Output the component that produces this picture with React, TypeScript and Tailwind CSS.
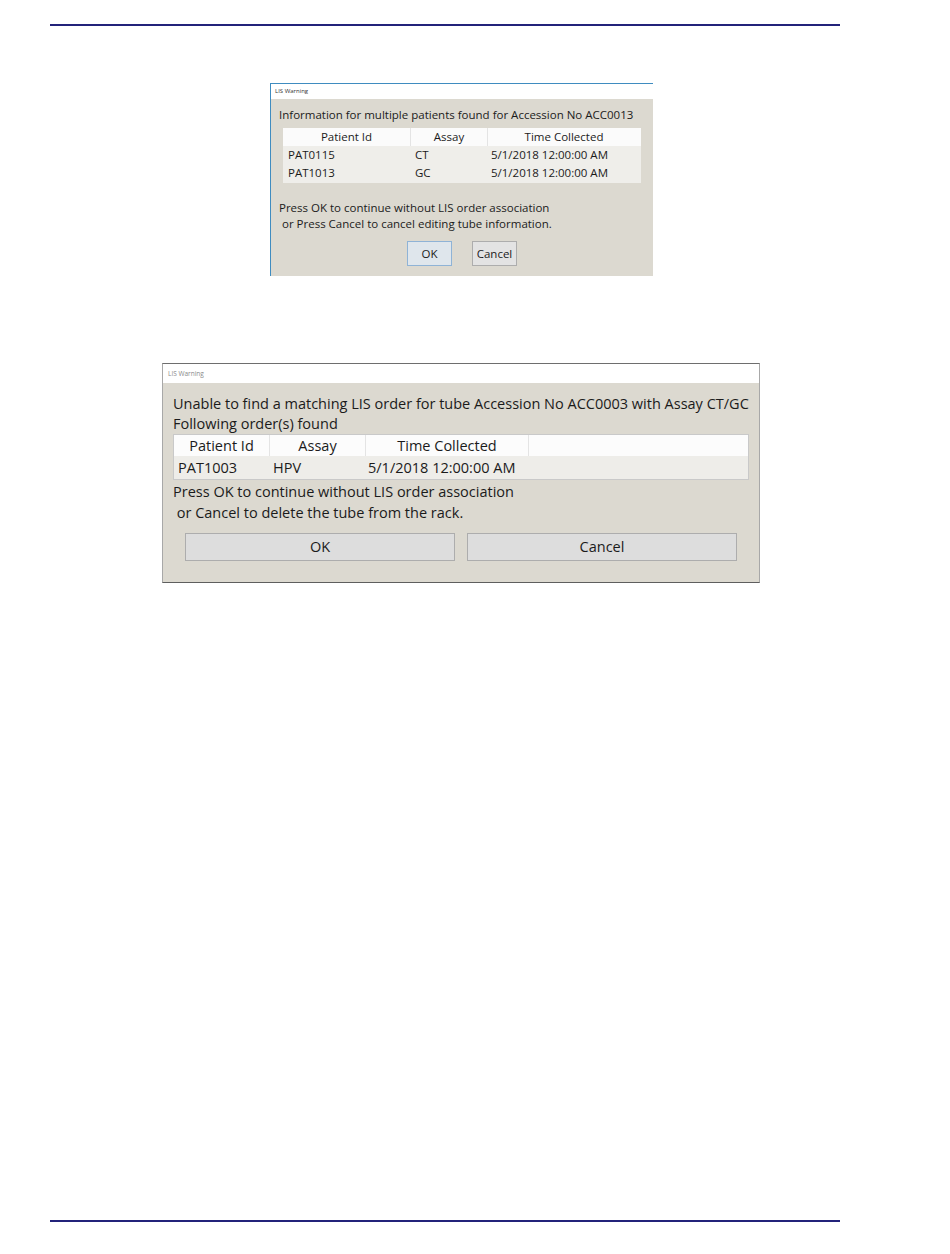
import React from "react";

const font = { fontFamily: '"Open Sans", "Noto Sans", sans-serif' };

function Dialog1() {
  return (
    <div className="ml-[270px] mt-[57px] w-[383px] border-l border-t border-[#3f8cc0] bg-white">
      <div className="h-[15px] pl-[4px] text-[6px] leading-[15px] text-[#333]">LIS Warning</div>
      <div className="flex h-[177px] flex-col bg-[#dcd9d0] text-[11.5px] text-[#1b1b1b]">
        <div className="mt-[8px] h-[16px] whitespace-nowrap pl-[8px] leading-[16px]">
          Information for multiple patients found for Accession No ACC0013
        </div>
        <div className="ml-[12px] mt-[5px] w-[358px] bg-[#efeeea]">
          <div className="flex h-[18px] bg-[#fbfbfb] leading-[18px]">
            <div className="w-[128px] border-r border-[#e4e4e4] text-center">Patient Id</div>
            <div className="w-[77px] border-r border-[#e4e4e4] text-center">Assay</div>
            <div className="w-[152px] text-center">Time Collected</div>
          </div>
          <div className="flex h-[18px] leading-[18px]">
            <div className="w-[128px] pl-[5px]">PAT0115</div>
            <div className="w-[77px] pl-[4px]">CT</div>
            <div className="w-[152px] pl-[3px]">5/1/2018 12:00:00 AM</div>
          </div>
          <div className="flex h-[19px] leading-[18px]">
            <div className="w-[128px] pl-[5px]">PAT1013</div>
            <div className="w-[77px] pl-[4px]">GC</div>
            <div className="w-[152px] pl-[3px]">5/1/2018 12:00:00 AM</div>
          </div>
        </div>
        <div className="mt-[17px] whitespace-pre pl-[8px] leading-[16px]">
          {"Press OK to continue without LIS order association\n or Press Cancel to cancel editing tube information."}
        </div>
        <div className="mt-[9px] flex justify-center gap-[20px]">
          <div className="flex h-[25px] w-[45px] items-center justify-center border border-[#8fb3d6] bg-[#dfe6ec]">
            OK
          </div>
          <div className="flex h-[25px] w-[45px] items-center justify-center border border-[#adadad] bg-[#e3e3e3]">
            Cancel
          </div>
        </div>
      </div>
    </div>
  );
}

function Dialog2() {
  return (
    <div className="ml-[162px] mt-[87px] w-[598px] border border-[#a8a8a8] border-t-[#6e6e6e] border-b-[#5e5e5e] bg-white">
      <div className="h-[19px] pl-[5px] text-[6.5px] leading-[19px] text-[#8a8a8a]">LIS Warning</div>
      <div className="flex h-[199px] flex-col bg-[#dcd9d0] text-[14.5px] text-[#1b1b1b]">
        <div className="mt-[11px] whitespace-nowrap pl-[10px] leading-[20px]">
          Unable to find a matching LIS order for tube Accession No ACC0003 with Assay CT/GC
        </div>
        <div className="whitespace-nowrap pl-[10px] leading-[20px]">Following order(s) found</div>
        <div className="ml-[10px] w-[576px] border border-[#c9c9c9] bg-[#eeede9]">
          <div className="flex h-[21px] bg-[#fcfcfc] leading-[21px]">
            <div className="w-[96px] border-r border-[#e4e4e4] text-center">Patient Id</div>
            <div className="w-[96px] border-r border-[#e4e4e4] text-center">Assay</div>
            <div className="w-[163px] border-r border-[#e4e4e4] text-center">Time Collected</div>
            <div className="flex-1" />
          </div>
          <div className="flex h-[23px] leading-[23px]">
            <div className="w-[96px] pl-[4px]">PAT1003</div>
            <div className="w-[96px] pl-[3px]">HPV</div>
            <div className="w-[163px] pl-[2px]">5/1/2018 12:00:00 AM</div>
          </div>
        </div>
        <div className="mt-[1px] whitespace-pre pl-[10px] leading-[21px]">
          {"Press OK to continue without LIS order association\n or Cancel to delete the tube from the rack."}
        </div>
        <div className="mt-[10px] flex gap-[12px] px-[22px]">
          <div className="flex h-[28px] flex-1 items-center justify-center border border-[#adadad] bg-[#dddddd]">
            OK
          </div>
          <div className="flex h-[28px] flex-1 items-center justify-center border border-[#adadad] bg-[#dddddd]">
            Cancel
          </div>
        </div>
      </div>
    </div>
  );
}

export default function App() {
  return (
    <div className="flex h-[1254px] w-[950px] flex-col bg-white" style={font}>
      <div className="ml-[50px] mt-[24px] h-[2px] w-[790px] bg-[#23237a]" />
      <Dialog1 />
      <Dialog2 />
      <div className="mb-[32px] ml-[50px] mt-auto h-[2px] w-[790px] bg-[#23237a]" />
    </div>
  );
}
